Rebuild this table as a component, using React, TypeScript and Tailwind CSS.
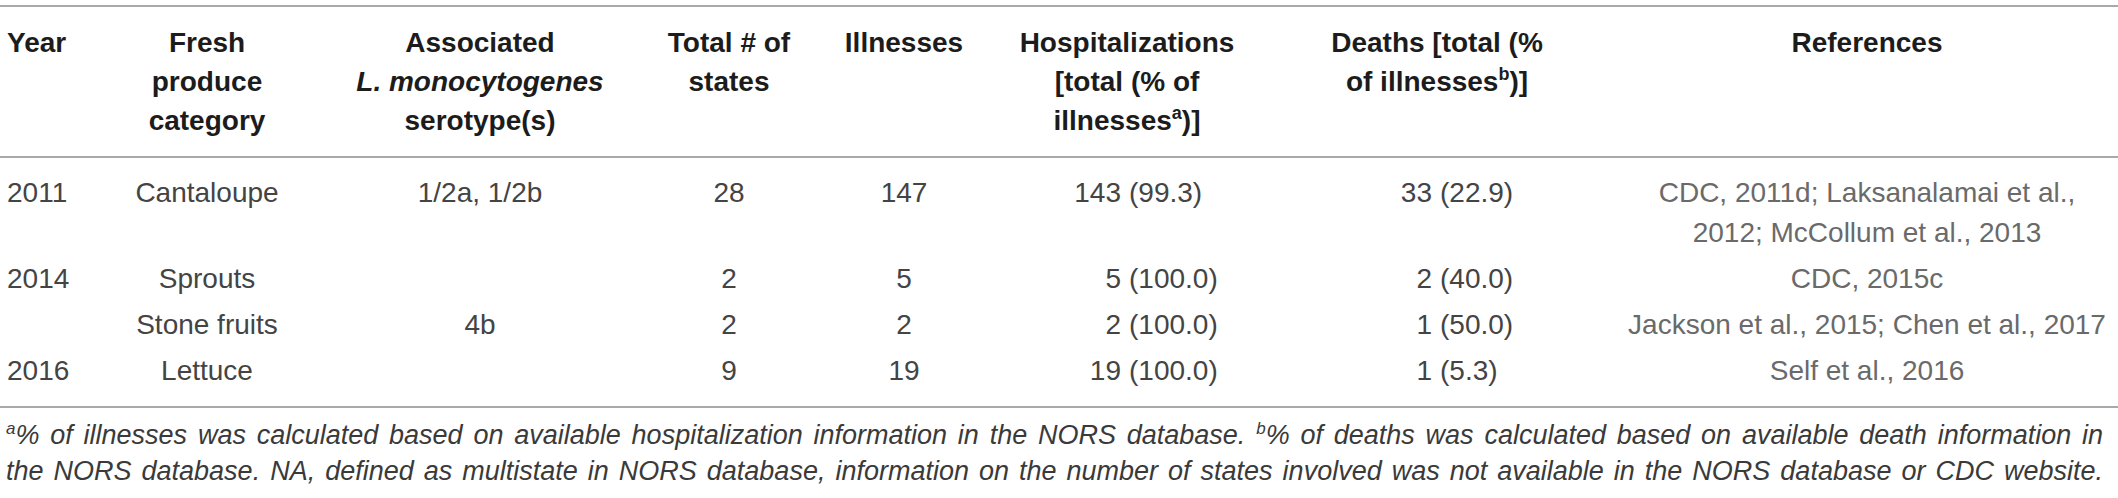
import * as React from "react";

type Row = {
    year: string;
    produce: string;
    serotype: string;
    states: string;
    ill: string;
    hosp: [string, string];
    deaths: [string, string];
    refs: string;
};

const rows: Row[] = [
    {
        year: "2011",
        produce: "Cantaloupe",
        serotype: "1/2a, 1/2b",
        states: "28",
        ill: "147",
        hosp: ["143", "(99.3)"],
        deaths: ["33", "(22.9)"],
        refs: "CDC, 2011d; Laksanalamai et al., 2012; McCollum et al., 2013",
    },
    {
        year: "2014",
        produce: "Sprouts",
        serotype: "",
        states: "2",
        ill: "5",
        hosp: ["5", "(100.0)"],
        deaths: ["2", "(40.0)"],
        refs: "CDC, 2015c",
    },
    {
        year: "",
        produce: "Stone fruits",
        serotype: "4b",
        states: "2",
        ill: "2",
        hosp: ["2", "(100.0)"],
        deaths: ["1", "(50.0)"],
        refs: "Jackson et al., 2015; Chen et al., 2017",
    },
    {
        year: "2016",
        produce: "Lettuce",
        serotype: "",
        states: "9",
        ill: "19",
        hosp: ["19", "(100.0)"],
        deaths: ["1", "(5.3)"],
        refs: "Self et al., 2016",
    },
];

const cols =
    "grid grid-cols-[100px_214px_332px_166px_184px_262px_358px_502px]";

export default function App() {
    return (
        <div className="w-[2118px] h-[498px] bg-white pt-[5px] font-['Liberation_Sans',Arial,sans-serif] overflow-hidden">
            <div className="border-t-2 border-[#a9a9a9]">
                {/* header */}
                <div
                    className={`${cols} pt-[16px] pb-[16px] text-[28px] leading-[39px] font-bold text-[#1c1c1c] border-b-2 border-[#a9a9a9]`}
                >
                    <div className="pl-[7px]">Year</div>
                    <div className="text-center">
                        Fresh
                        <br />
                        produce
                        <br />
                        category
                    </div>
                    <div className="text-center">
                        Associated
                        <br />
                        <i>L. monocytogenes</i>
                        <br />
                        serotype(s)
                    </div>
                    <div className="text-center">
                        Total # of
                        <br />
                        states
                    </div>
                    <div className="text-center">Illnesses</div>
                    <div className="text-center">
                        Hospitalizations
                        <br />
                        [total (% of
                        <br />
                        illnesses
                        <sup className="text-[18px] relative -top-[11px]">a</sup>
                        )]
                    </div>
                    <div className="text-center">
                        Deaths [total (%
                        <br />
                        of illnesses
                        <sup className="text-[18px] relative -top-[11px]">b</sup>
                        )]
                    </div>
                    <div className="text-center">References</div>
                </div>

                {/* body */}
                <div className="pt-[12px] pb-[12px] text-[28px] leading-[40px] text-[#444444] border-b-2 border-[#a9a9a9]">
                    {rows.map((r, i) => (
                        <div key={i} className={`${cols} py-[3px]`}>
                            <div className="pl-[7px]">{r.year}</div>
                            <div className="text-center">{r.produce}</div>
                            <div className="text-center">{r.serotype}</div>
                            <div className="text-center">{r.states}</div>
                            <div className="text-center">{r.ill}</div>
                            <div className="grid grid-cols-[133px_1fr]">
                                <span className="text-right pr-[8px]">
                                    {r.hosp[0]}
                                </span>
                                <span>{r.hosp[1]}</span>
                            </div>
                            <div className="grid grid-cols-[182px_1fr]">
                                <span className="text-right pr-[8px]">
                                    {r.deaths[0]}
                                </span>
                                <span>{r.deaths[1]}</span>
                            </div>
                            <div className="text-center px-[10px] text-[#6a6a6a]">
                                {r.refs}
                            </div>
                        </div>
                    ))}
                </div>

                {/* footnotes */}
                <div className="pt-[9px] pl-[6px] pr-[15px] text-[27px] leading-[36px] italic text-[#3a3a3a]">
                    <p className="text-justify [text-align-last:justify] whitespace-nowrap">
                        <sup className="text-[17px] relative -top-[10px]">a</sup>
                        % of illnesses was calculated based on available
                        hospitalization information in the NORS database.{" "}
                        <sup className="text-[17px] relative -top-[10px]">b</sup>
                        % of deaths was calculated based on available death
                        information in
                    </p>
                    <p className="text-justify [text-align-last:justify] whitespace-nowrap">
                        the NORS database. NA, defined as multistate in NORS
                        database, information on the number of states involved
                        was not available in the NORS database or CDC website.
                    </p>
                </div>
            </div>
        </div>
    );
}
